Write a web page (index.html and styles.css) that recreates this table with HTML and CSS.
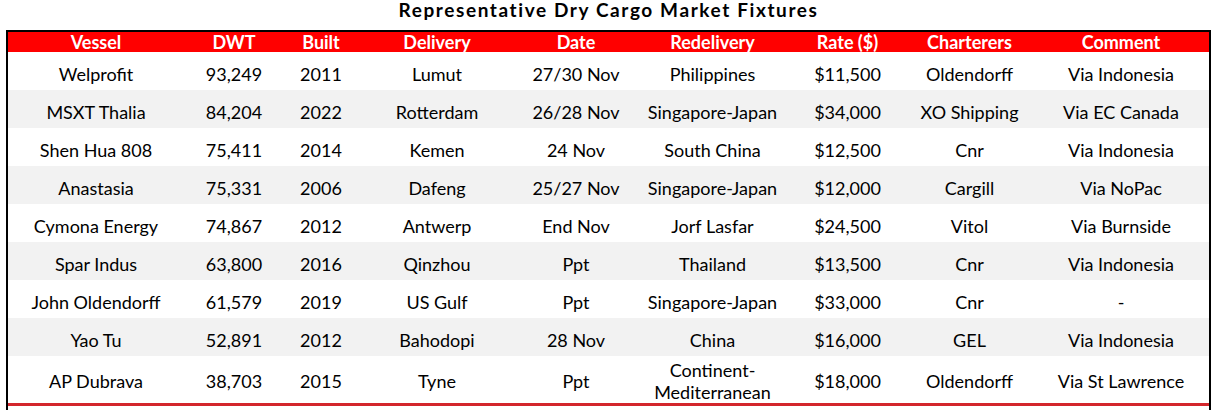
FILE: index.html
```html
<!DOCTYPE html>
<html lang="en">
<head>
<meta charset="utf-8">
<title>Representative Dry Cargo Market Fixtures</title>
<link rel="stylesheet" href="styles.css">
</head>
<body>
<h1 class="title">Representative Dry Cargo Market Fixtures</h1>
<div class="frame">
  <table class="fixtures">
    <colgroup>
      <col class="c-vessel"><col class="c-dwt"><col class="c-built"><col class="c-delivery"><col class="c-date"><col class="c-redelivery"><col class="c-rate"><col class="c-charterers"><col class="c-comment">
    </colgroup>
    <thead>
      <tr><th>Vessel</th><th>DWT</th><th>Built</th><th>Delivery</th><th>Date</th><th>Redelivery</th><th>Rate ($)</th><th>Charterers</th><th>Comment</th></tr>
    </thead>
    <tbody>
      <tr><td>Welprofit</td><td>93,249</td><td>2011</td><td>Lumut</td><td>27/30 Nov</td><td>Philippines</td><td>$11,500</td><td>Oldendorff</td><td>Via Indonesia</td></tr>
      <tr class="alt"><td>MSXT Thalia</td><td>84,204</td><td>2022</td><td>Rotterdam</td><td>26/28 Nov</td><td>Singapore-Japan</td><td>$34,000</td><td>XO Shipping</td><td>Via EC Canada</td></tr>
      <tr><td>Shen Hua 808</td><td>75,411</td><td>2014</td><td>Kemen</td><td>24 Nov</td><td>South China</td><td>$12,500</td><td>Cnr</td><td>Via Indonesia</td></tr>
      <tr class="alt"><td>Anastasia</td><td>75,331</td><td>2006</td><td>Dafeng</td><td>25/27 Nov</td><td>Singapore-Japan</td><td>$12,000</td><td>Cargill</td><td>Via NoPac</td></tr>
      <tr><td>Cymona Energy</td><td>74,867</td><td>2012</td><td>Antwerp</td><td>End Nov</td><td>Jorf Lasfar</td><td>$24,500</td><td>Vitol</td><td>Via Burnside</td></tr>
      <tr class="alt"><td>Spar Indus</td><td>63,800</td><td>2016</td><td>Qinzhou</td><td>Ppt</td><td>Thailand</td><td>$13,500</td><td>Cnr</td><td>Via Indonesia</td></tr>
      <tr><td>John Oldendorff</td><td>61,579</td><td>2019</td><td>US Gulf</td><td>Ppt</td><td>Singapore-Japan</td><td>$33,000</td><td>Cnr</td><td>-</td></tr>
      <tr class="alt"><td>Yao Tu</td><td>52,891</td><td>2012</td><td>Bahodopi</td><td>28 Nov</td><td>China</td><td>$16,000</td><td>GEL</td><td>Via Indonesia</td></tr>
      <tr class="last"><td>AP Dubrava</td><td>38,703</td><td>2015</td><td>Tyne</td><td>Ppt</td><td>Continent-<br>Mediterranean</td><td>$18,000</td><td>Oldendorff</td><td>Via St Lawrence</td></tr>
    </tbody>
  </table>
  <div class="rule"></div>
</div>
</body>
</html>
```
FILE: styles.css
```css
body {
  margin: 0;
  background: #fff;
  color: #000;
  font-family: Lato, "Open Sans", sans-serif;
}

.title {
  margin: 0;
  width: 1217px;
  height: 30px;
  text-align: center;
  font-size: 19px;
  font-weight: 700;
  letter-spacing: 1.6px;
  line-height: 20px;
}

.frame {
  margin-left: 6px;
  width: 1201px;
  border: 2px solid #000;
  border-bottom: 0;
}

.fixtures {
  width: 1201px;
  border-collapse: collapse;
  table-layout: fixed;
}

.c-vessel { width: 176px; }
.c-dwt { width: 100px; }
.c-built { width: 74px; }
.c-delivery { width: 158px; }
.c-date { width: 120px; }
.c-redelivery { width: 153px; }
.c-rate { width: 117px; }
.c-charterers { width: 127px; }
.c-comment { width: 176px; }

.fixtures thead tr {
  height: 20px;
}

.fixtures th {
  padding: 0;
  background: #ff0000;
  color: #fff;
  font-size: 18px;
  font-weight: 700;
  line-height: 20px;
  text-align: center;
}

.fixtures tbody tr {
  height: 38px;
}

.fixtures td {
  padding: 6px 0 0;
  font-size: 18px;
  line-height: 22px;
  text-align: center;
  vertical-align: middle;
  white-space: nowrap;
}

.fixtures .alt td {
  background: #f2f2f2;
}

.fixtures tbody tr.last {
  height: 47px;
}

.fixtures .last td {
  padding-top: 3px;
  line-height: 22px;
}

.rule {
  height: 10px;
  border-top: 3px solid #d3262c;
}
```
